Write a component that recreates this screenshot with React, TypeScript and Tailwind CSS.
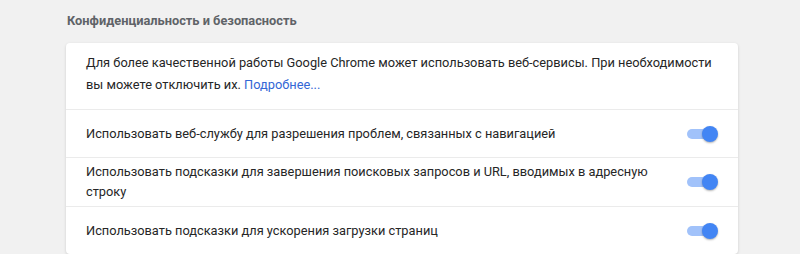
export default function App() {
  const rows = [
    "Использовать веб-службу для разрешения проблем, связанных с навигацией",
    "Использовать подсказки для завершения поисковых запросов и URL, вводимых в адресную строку",
    "Использовать подсказки для ускорения загрузки страниц",
  ];

  return (
    <div className="w-[800px] h-[254px] overflow-hidden bg-[#f1f1f1] font-['Roboto',sans-serif] text-[12.8px] text-[#262626]">
      <div className="ml-[66px] w-[672px]">
        <h2 className="pt-3 pb-[13px] pl-px text-[12.8px] leading-[18px] font-bold text-[#5f6368]">
          Конфиденциальность и безопасность
        </h2>
        <div className="bg-white rounded-sm shadow-[0_1px_3px_rgba(0,0,0,0.15)]">
          <p className="px-5 pt-[9px] pb-[13px] leading-[22px]">
            Для более качественной работы Google Chrome может использовать веб-сервисы. При необходимости вы можете отключить их.{" "}
            <a className="text-[#3367d6]">Подробнее...</a>
          </p>
          {rows.map((text) => (
            <div key={text} className="flex items-center gap-5 min-h-[48px] px-5 py-[4px] border-t border-[#ebebeb]">
              <div className="flex-1 leading-[20px] pr-[10px]">{text}</div>
              <div className="relative w-[31px] h-4 shrink-0">
                <div className="absolute left-0 top-[3px] w-[26px] h-[10px] rounded-full bg-[#a1c2fa]" />
                <div className="absolute right-0 top-0 w-4 h-4 rounded-full bg-[#4285f4] shadow-[0_1px_2px_rgba(0,0,0,0.3)]" />
              </div>
            </div>
          ))}
        </div>
      </div>
    </div>
  );
}
